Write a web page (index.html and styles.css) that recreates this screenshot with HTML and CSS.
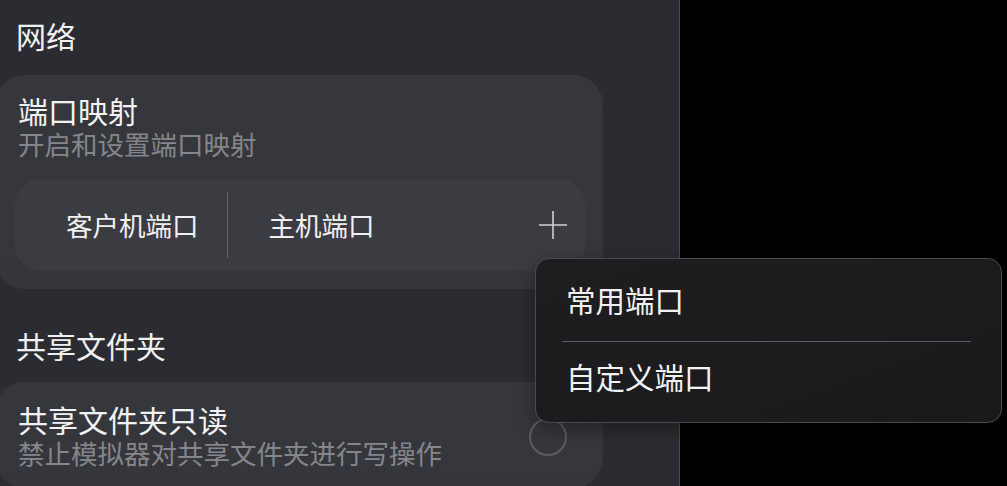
FILE: index.html
```html
<!DOCTYPE html>
<html lang="zh-CN">
<head>
<meta charset="utf-8">
<title>设置</title>
<link rel="stylesheet" href="styles.css">
</head>
<body>
<div class="screen">
  <div class="panel">
    <div class="section-title">网络</div>
    <div class="card card-ports">
      <div class="card-title">端口映射</div>
      <div class="card-sub">开启和设置端口映射</div>
      <div class="port-box">
        <div class="port-col port-guest">客户机端口</div>
        <div class="port-divider"></div>
        <div class="port-col port-host">主机端口</div>
        <div class="spacer"></div>
        <svg class="plus" width="30" height="30" viewBox="0 0 30 30"><path d="M15 1V29M1 15H29" stroke="#cfcfd2" stroke-width="1.6" fill="none"/></svg>
      </div>
    </div>
    <div class="section-title section-second">共享文件夹</div>
    <div class="card card-share">
      <div class="row">
        <div class="row-text">
          <div class="card-title">共享文件夹只读</div>
          <div class="card-sub">禁止模拟器对共享文件夹进行写操作</div>
        </div>
        <div class="radio"></div>
      </div>
    </div>
  </div>
  <div class="menu">
    <div class="menu-item">常用端口</div>
    <div class="menu-sep"></div>
    <div class="menu-item menu-item-last">自定义端口</div>
  </div>
</div>
</body>
</html>
```
FILE: styles.css
```css
* { box-sizing: border-box; }
html, body { margin: 0; padding: 0; }
body {
  background: #000;
  font-family: "Noto Sans CJK SC", "Noto Sans", sans-serif;
  color: #f2f2f4;
  width: 1007px;
  height: 486px;
  overflow: hidden;
}
.screen {
  position: relative;
  width: 1007px;
  height: 486px;
}
.panel {
  width: 680px;
  height: 486px;
  background: #2b2c31;
  border-right: 1px solid #4a4b50;
  padding-top: 15px;
  overflow: hidden;
}
.section-title {
  font-size: 30px;
  line-height: 40px;
  padding-left: 16px;
  color: #f0f0f2;
}
.section-second { margin-top: 36px; }
.card {
  margin-left: -5px;
  width: 608px;
  background: linear-gradient(180deg, #36373c 0%, #35363b 100%);
  border-radius: 30px;
  margin-top: 20px;
}
.card-ports {
  padding: 16px 18px 18px 20px;
}
.card-title {
  font-size: 30px;
  line-height: 38px;
  padding-left: 3px;
  color: #f2f2f4;
}
.card-sub {
  font-size: 26.5px;
  line-height: 30px;
  padding-left: 3px;
  color: #85868b;
}
.port-box {
  margin-top: 20px;
  height: 92px;
  background: #3b3c41;
  border-radius: 26px;
  display: flex;
  align-items: center;
  padding-left: 51px;
  padding-right: 17px;
}
.port-col {
  font-size: 26.5px;
  color: #f0f0f2;
  line-height: 30px;
}
.port-guest { margin-right: 28px; }
.port-divider {
  width: 1px;
  height: 66px;
  background: #66676c;
}
.port-host { margin-left: 41px; }
.spacer { flex: 1; }
.plus { display: block; }
.card-share {
  padding: 18px 36px 20px 20px;
  margin-top: 17px;
}
.row {
  display: flex;
  align-items: center;
  justify-content: space-between;
}
.radio {
  width: 38px;
  height: 38px;
  border-radius: 50%;
  border: 2px solid #5c5d62;
  margin-top: 5px;
}
.menu {
  position: absolute;
  left: 535px;
  top: 258px;
  width: 467px;
  height: 165px;
  background: linear-gradient(160deg, #1e1e21 0%, #1a1a1d 100%);
  border: 1px solid #4a4a4f;
  border-radius: 14px;
  box-shadow: 0 6px 18px rgba(0,0,0,0.35);
}
.menu-item {
  height: 80px;
  display: flex;
  align-items: center;
  padding-left: 30px;
  font-size: 29.5px;
  color: #f2f2f4;
}
.menu-item-last { height: 68px; }
.menu-sep {
  height: 1px;
  background: #5a5a5f;
  margin: 2px 30px 0 26px;
}
```
